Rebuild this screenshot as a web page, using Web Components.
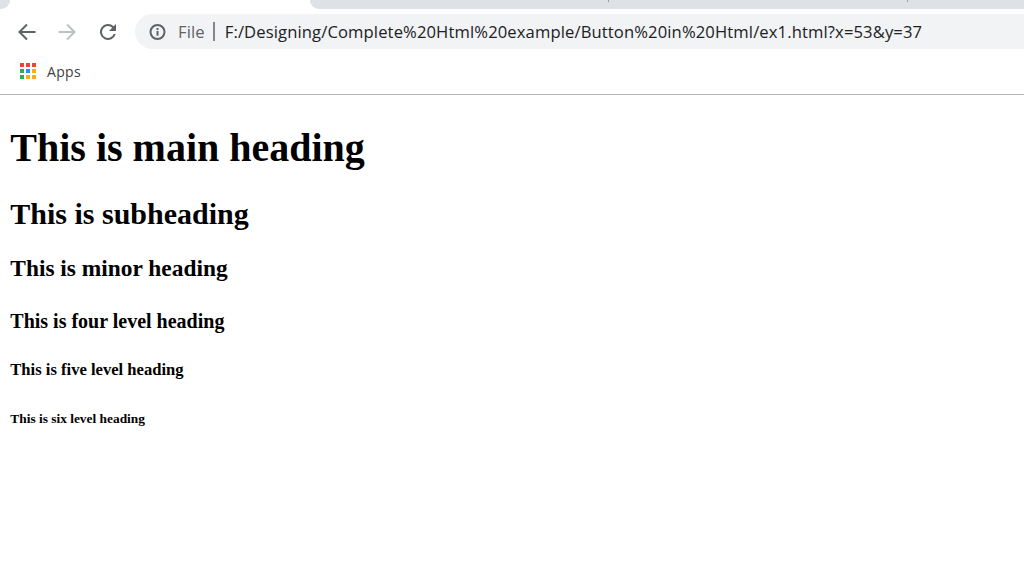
<!DOCTYPE html>
<html lang="en"><head><meta charset="utf-8"><title>ex1</title>
<style>html,body{margin:0;padding:0;background:#fff;overflow:hidden}body{width:1024px;height:584px;display:flex;flex-direction:column}</style>
</head><body>
<browser-chrome url="F:/Designing/Complete%20Html%20example/Button%20in%20Html/ex1.html?x=53&amp;y=37"></browser-chrome>
<page-content>
<h1>This is main heading</h1>
<h2>This is subheading</h2>
<h3>This is minor heading</h3>
<h4>This is four level heading</h4>
<h5>This is five level heading</h5>
<h6>This is six level heading</h6>
</page-content>
<script>
class BrowserChrome extends HTMLElement{
 constructor(){super();this.attachShadow({mode:'open'});}
 connectedCallback(){
  const url=this.getAttribute('url').replace(/&/g,'&amp;');
  this.shadowRoot.innerHTML=`<style>
  :host{display:block;flex:none;height:95px;box-sizing:border-box;border-bottom:1px solid #b5b5b5;background:#fff;font-family:"Open Sans","Noto Sans",sans-serif}
  .tabs{height:9px;display:flex;justify-content:space-between;overflow:hidden}
  .tabs i{display:block;background:#dee1e6}
  .l{width:10px;border-bottom-right-radius:9px}
  .r{width:714px;border-bottom-left-radius:9px;position:relative}
  .r b{position:absolute;top:0;width:1px;height:2px;background:#9aa0a6}
  .tool{height:35px;margin-top:5px;display:flex;align-items:center;padding-left:15px}
  .btn{width:24px;height:24px;flex:none;margin-right:16px}
  .reload{margin-left:1px;margin-right:15px}
  .omni{flex:1;height:35px;background:#f1f3f4;border-radius:17.5px 0 0 17.5px;display:flex;align-items:center;padding-left:14px;font-size:16.6px;letter-spacing:.12px;color:#202124;white-space:nowrap}
  .file{color:#5f6368;margin-left:11px}
  .sep{width:2px;height:19px;background:#80868b;margin:0 10px 0 8px}
  .marks{height:45px;display:flex;align-items:center;padding:0 0 1px 20px;box-sizing:border-box;font-size:14px;letter-spacing:.3px;color:#3c4043}
  .marks svg{margin-right:11px}
  </style>
  <div class="tabs"><i class="l"></i><i class="r"><b style="left:298px"></b><b style="left:597px"></b></i></div>
  <div class="tool">
   <svg class="btn" viewBox="0 0 24 24" fill="none" stroke="#5f6368" stroke-width="2"><path d="M20.5 12H5M12 4.500 4.500 12l7.500 7.500"/></svg>
   <svg class="btn" viewBox="0 0 24 24" fill="none" stroke="#bdc1c6" stroke-width="2"><path d="M3.500 12H19M12 4.500l7.500 7.500-7.500 7.500"/></svg>
   <svg class="btn reload" viewBox="0 0 24 24" fill="#5f6368"><path d="M17.650 6.350A8 8 0 1 0 19.730 14h-2.080a6 6 0 1 1-1.410-6.240L13 11h7V4z"/></svg>
   <div class="omni">
    <svg width="18" height="18" viewBox="0 0 18 18" style="flex:none"><circle cx="8.500" cy="9" r="7" fill="none" stroke="#5f6368" stroke-width="2"/><path d="M7.500 8h2v4.800h-2zM7.500 5h2v2h-2z" fill="#5f6368"/></svg>
    <span class="file">File</span><span class="sep"></span><span>${url}</span>
   </div>
  </div>
  <div class="marks">
   <svg width="16" height="16" viewBox="0 0 16 16"><path fill="#ef4136" d="M0 0h4v4H0zM6 0h4v4H6zM12 0h4v4h-4z"/><path fill="#34a853" d="M0 6h4v4H0z"/><path fill="#2f8ff0" d="M6 6h4v4H6z"/><path fill="#fbae17" d="M12 6h4v4h-4zM6 12h4v4H6zM12 12h4v4h-4z"/><path fill="#34a853" d="M0 12h4v4H0z"/></svg>
   <span>Apps</span>
  </div>`;
 }
}
class PageContent extends HTMLElement{
 constructor(){super();const s=this.attachShadow({mode:'open'});
  s.innerHTML=`<style>
  :host{display:block;flex:1;min-height:0;padding:0 10px 0 10.3px;font:20px "Liberation Serif","Times New Roman",serif;color:#000}
  ::slotted(*){font-weight:bold;display:block}
  ::slotted(h1){font-size:40px;margin:28.6px 0 26.9px}
  ::slotted(h2){font-size:30px;margin:26.9px 0 23.9px}
  ::slotted(h3){font-size:23.4px;margin:23.9px 0 27.6px}
  ::slotted(h4){font-size:20px;margin:27.6px 0 27.4px}
  ::slotted(h5){font-size:16.6px;margin:27.4px 0 30.2px}
  ::slotted(h6){font-size:13.4px;margin:30.2px 0}
  </style><slot></slot>`;}
}
customElements.define('browser-chrome',BrowserChrome);
customElements.define('page-content',PageContent);
</script>
</body></html>
